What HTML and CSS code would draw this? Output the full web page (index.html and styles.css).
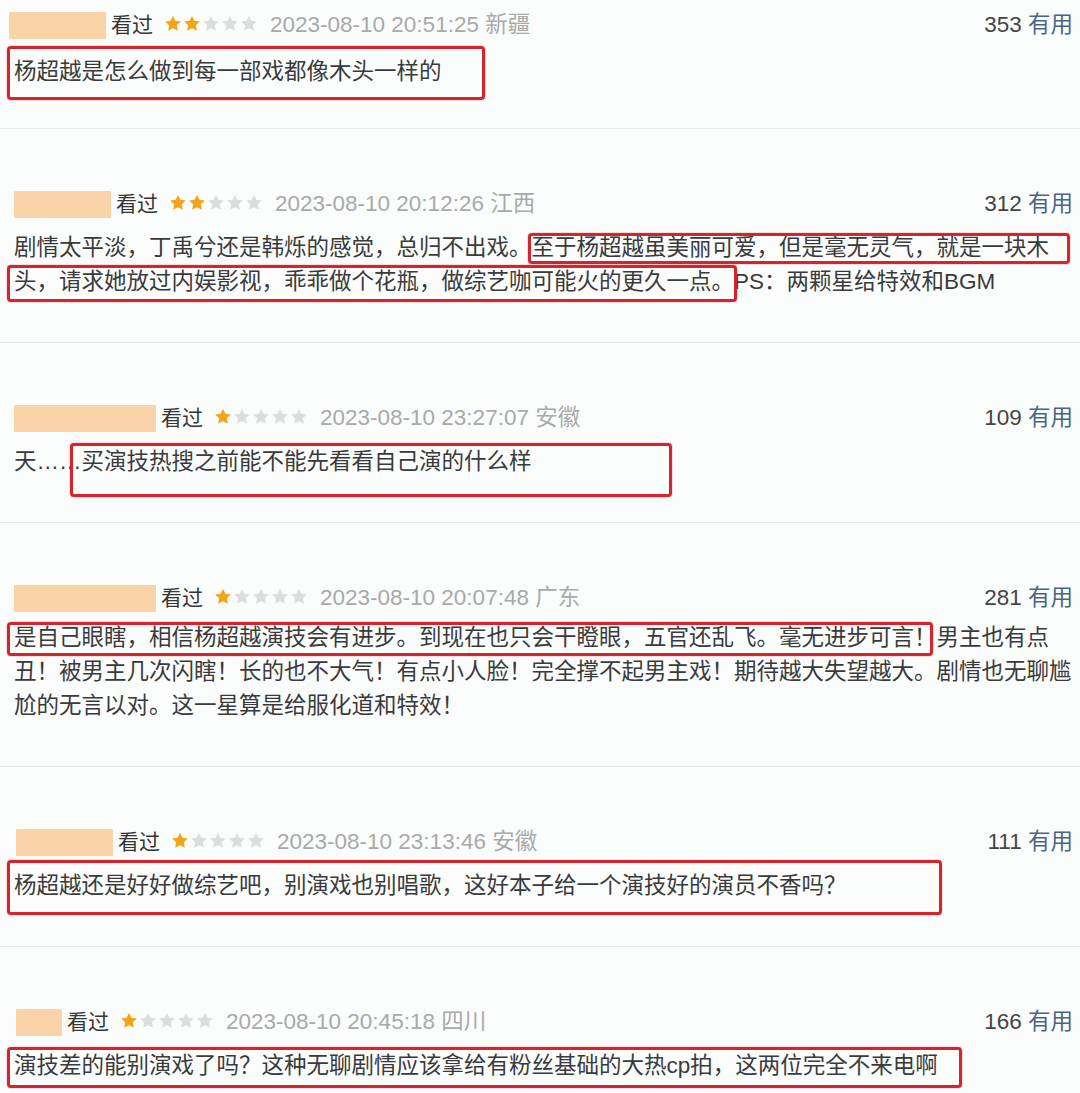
FILE: index.html
```html
<!DOCTYPE html>
<html lang="zh-CN">

<head>
    <meta charset="UTF-8">
    <meta name="viewport" content="width=device-width, initial-scale=1.0">
    <title>短评</title>
    <link rel="stylesheet" href="styles.css">
</head>

<body>
    <svg class="sprite" width="0" height="0">
        <symbol id="star" viewBox="0 0 24 24">
            <path d="M12 1.2l3.2 6.6 7.3.9-5.4 5 1.4 7.3L12 17.5l-6.5 3.5 1.4-7.3-5.4-5 7.3-.9z" />
        </symbol>
    </svg>

    <div class="comments">
        <div class="comment comment-first">
            <div class="comment-head">
                <span class="name name-md name-shift"></span>
                <span class="seen">看过</span>
                <span class="stars">
                    <svg class="star on"><use href="#star" /></svg>
                    <svg class="star on"><use href="#star" /></svg>
                    <svg class="star"><use href="#star" /></svg>
                    <svg class="star"><use href="#star" /></svg>
                    <svg class="star"><use href="#star" /></svg>
                </span>
                <span class="time">2023-08-10 20:51:25 新疆</span>
                <span class="votes">353 <span class="useful">有用</span></span>
            </div>
            <p class="text gap-l">
                杨超越是怎么做到每一部戏都像木头一样的
                <span class="mark mark-1"></span>
            </p>
        </div>

        <div class="comment">
            <div class="comment-head">
                <span class="name name-md"></span>
                <span class="seen">看过</span>
                <span class="stars">
                    <svg class="star on"><use href="#star" /></svg>
                    <svg class="star on"><use href="#star" /></svg>
                    <svg class="star"><use href="#star" /></svg>
                    <svg class="star"><use href="#star" /></svg>
                    <svg class="star"><use href="#star" /></svg>
                </span>
                <span class="time">2023-08-10 20:12:26 江西</span>
                <span class="votes">312 <span class="useful">有用</span></span>
            </div>
            <p class="text">
                剧情太平淡，丁禹兮还是韩烁的感觉，总归不出戏。至于杨超越虽美丽可爱，但是毫无灵气，就是一块木<br>头，请求她放过内娱影视，乖乖做个花瓶，做综艺咖可能火的更久一点。PS：两颗星给特效和BGM
                <span class="mark mark-2a"></span>
                <span class="mark mark-2b"></span>
            </p>
        </div>

        <div class="comment">
            <div class="comment-head">
                <span class="name name-lg"></span>
                <span class="seen">看过</span>
                <span class="stars">
                    <svg class="star on"><use href="#star" /></svg>
                    <svg class="star"><use href="#star" /></svg>
                    <svg class="star"><use href="#star" /></svg>
                    <svg class="star"><use href="#star" /></svg>
                    <svg class="star"><use href="#star" /></svg>
                </span>
                <span class="time">2023-08-10 23:27:07 安徽</span>
                <span class="votes">109 <span class="useful">有用</span></span>
            </div>
            <p class="text">
                天……买演技热搜之前能不能先看看自己演的什么样
                <span class="mark mark-3"></span>
            </p>
        </div>

        <div class="comment">
            <div class="comment-head">
                <span class="name name-lg"></span>
                <span class="seen">看过</span>
                <span class="stars">
                    <svg class="star on"><use href="#star" /></svg>
                    <svg class="star"><use href="#star" /></svg>
                    <svg class="star"><use href="#star" /></svg>
                    <svg class="star"><use href="#star" /></svg>
                    <svg class="star"><use href="#star" /></svg>
                </span>
                <span class="time">2023-08-10 20:07:48 广东</span>
                <span class="votes">281 <span class="useful">有用</span></span>
            </div>
            <p class="text gap-s">
                是自己眼瞎，相信杨超越演技会有进步。到现在也只会干瞪眼，五官还乱飞。毫无进步可言！男主也有点<br>丑！被男主几次闪瞎！长的也不大气！有点小人脸！完全撑不起男主戏！期待越大失望越大。剧情也无聊尴<br>尬的无言以对。这一星算是给服化道和特效！
                <span class="mark mark-4"></span>
            </p>
        </div>

        <div class="comment">
            <div class="comment-head">
                <span class="name name-md name-in"></span>
                <span class="seen">看过</span>
                <span class="stars">
                    <svg class="star on"><use href="#star" /></svg>
                    <svg class="star"><use href="#star" /></svg>
                    <svg class="star"><use href="#star" /></svg>
                    <svg class="star"><use href="#star" /></svg>
                    <svg class="star"><use href="#star" /></svg>
                </span>
                <span class="time">2023-08-10 23:13:46 安徽</span>
                <span class="votes">111 <span class="useful">有用</span></span>
            </div>
            <p class="text">
                杨超越还是好好做综艺吧，别演戏也别唱歌，这好本子给一个演技好的演员不香吗？
                <span class="mark mark-5"></span>
            </p>
        </div>

        <div class="comment">
            <div class="comment-head">
                <span class="name name-sm name-in"></span>
                <span class="seen">看过</span>
                <span class="stars">
                    <svg class="star on"><use href="#star" /></svg>
                    <svg class="star"><use href="#star" /></svg>
                    <svg class="star"><use href="#star" /></svg>
                    <svg class="star"><use href="#star" /></svg>
                    <svg class="star"><use href="#star" /></svg>
                </span>
                <span class="time">2023-08-10 20:45:18 四川</span>
                <span class="votes">166 <span class="useful">有用</span></span>
            </div>
            <p class="text">
                演技差的能别演戏了吗？这种无聊剧情应该拿给有粉丝基础的大热cp拍，这两位完全不来电啊
                <span class="mark mark-6"></span>
            </p>
        </div>
    </div>
</body>

</html>
```

FILE: styles.css
```css
* {
    margin: 0;
    padding: 0;
    box-sizing: border-box;
}

body {
    font-family: 'Liberation Sans', 'Noto Sans CJK SC', sans-serif;
    background: #fbfdfd;
    color: #3a3a3a;
    overflow: hidden;
}

.sprite {
    display: block;
    width: 0;
    height: 0;
}

.comment {
    padding: 61px 7px 43px 14px;
    border-bottom: 1px solid #e5e8ea;
}

.comment-first {
    padding-top: 11px;
    padding-bottom: 39px;
}

/* header row: name, 看过, stars, time, votes */
.comment-head {
    display: flex;
    align-items: center;
    height: 28px;
    font-size: 22.5px;
    line-height: 28px;
    white-space: nowrap;
}

.name {
    display: inline-block;
    height: 27px;
    background: #fad3a8;
    border-radius: 1px;
    filter: blur(0.6px);
    margin-right: 5px;
}

.name-sm {
    width: 46px;
}

.name-md {
    width: 97px;
}

.name-lg {
    width: 142px;
}

.name-shift {
    margin-left: -5px;
}

.name-in {
    margin-left: 2px;
}

.seen {
    font-size: 21px;
    color: #353535;
}

.stars {
    display: flex;
    gap: 1px;
    margin: -2px 12px 0 11px;
}

.star {
    width: 18px;
    height: 18px;
    fill: #dcdddf;
}

.star.on {
    fill: #f5a417;
}

.time {
    color: #a9a9a9;
}

.votes {
    margin-left: auto;
    color: #444;
}

.useful {
    color: #4a6583;
}

/* comment body */
.text {
    position: relative;
    margin-top: 13px;
    font-size: 22.5px;
    line-height: 34px;
    white-space: nowrap;
    color: #3a3a3a;
}

.gap-s {
    margin-top: 9px;
}

.gap-l {
    margin-top: 16px;
}

/* red annotation boxes drawn over the text */
.mark {
    position: absolute;
    border: 3px solid #d3252b;
    border-radius: 4px;
    box-shadow: 0 0 1.5px rgba(140, 0, 0, 0.6);
}

.mark-1 {
    top: -9px;
    left: -7px;
    width: 478px;
    height: 54px;
}

.mark-2a {
    top: 2px;
    left: 514px;
    width: 542px;
    height: 31px;
}

.mark-2b {
    top: 34px;
    left: -7px;
    width: 730px;
    height: 37px;
}

.mark-3 {
    top: -2px;
    left: 56px;
    width: 602px;
    height: 54px;
}

.mark-4 {
    top: 1px;
    left: -7px;
    width: 926px;
    height: 34px;
}

.mark-5 {
    top: -9px;
    left: -7px;
    width: 935px;
    height: 55px;
}

.mark-6 {
    top: -2px;
    left: -7px;
    width: 955px;
    height: 41px;
}
```
